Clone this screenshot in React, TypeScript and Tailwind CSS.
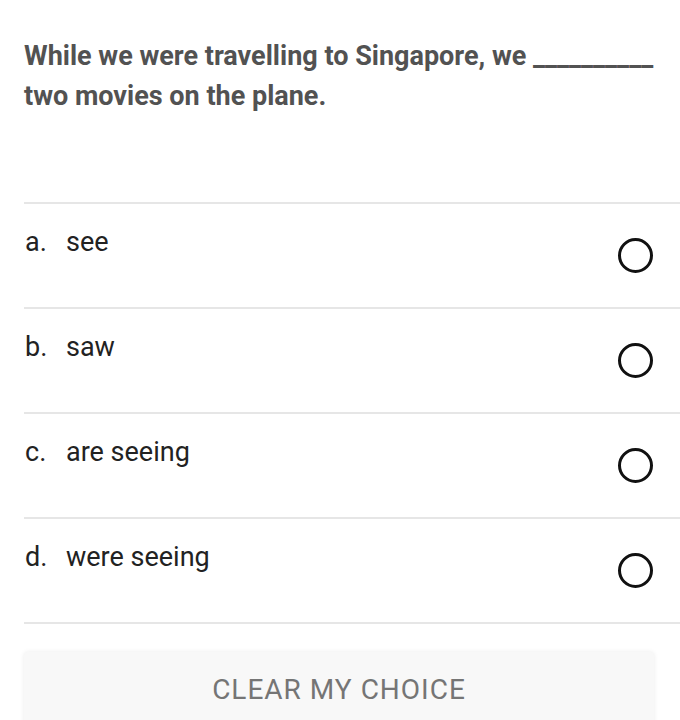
const options = [
  { key: 'a.', text: 'see' },
  { key: 'b.', text: 'saw' },
  { key: 'c.', text: 'are seeing' },
  { key: 'd.', text: 'were seeing' },
];

export default function App() {
  return (
    <div className="min-h-[720px] bg-white pt-[36px] pl-6 font-['Roboto',sans-serif] overflow-hidden">
      <h1 className="w-[645px] text-[27px] leading-[40px] font-bold text-[#525252]">
        While we were travelling to Singapore, we __________ two movies on the plane.
      </h1>

      <div className="mt-[86px] border-t-2 border-[#e6e6e6]">
        {options.map((o) => (
          <div
            key={o.key}
            className="flex h-[105px] border-b-2 border-[#e6e6e6] pr-[27px]"
          >
            <div className="flex flex-1 pt-[20px] text-[27px] leading-[36px] text-[#222]">
              <span className="w-[42px] pl-px">{o.key}</span>
              <span>{o.text}</span>
            </div>
            <div className="flex items-center">
              <span className="block h-[35px] w-[35px] rounded-full border-[3px] border-[#111]" />
            </div>
          </div>
        ))}
      </div>

      <div className="mt-[28px] w-[630px] h-[80px] rounded-sm bg-[#f8f8f8] shadow-[0_0_5px_rgba(0,0,0,0.08)] flex justify-center pt-[22px]">
        <span className="text-[28px] leading-[32px] tracking-[1px] text-[#757575] uppercase">
          Clear my choice
        </span>
      </div>
    </div>
  );
}
